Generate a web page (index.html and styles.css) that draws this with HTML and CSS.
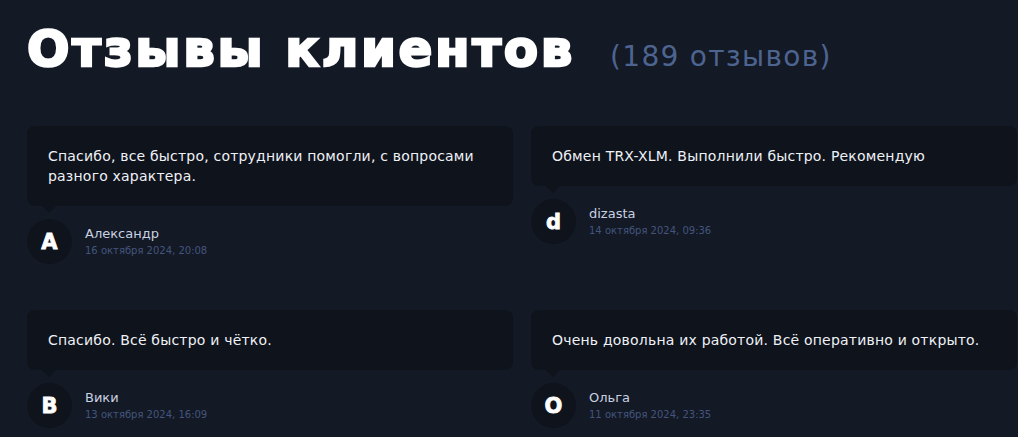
FILE: index.html
```html
<!DOCTYPE html>
<html lang="ru">
<head>
<meta charset="utf-8">
<title>Отзывы клиентов</title>
<link rel="stylesheet" href="styles.css">
</head>
<body>
<main class="page">
  <header class="head">
    <h1 class="title">Отзывы клиентов</h1>
    <span class="count">(189 отзывов)</span>
  </header>
  <section class="reviews">
    <article class="review">
      <div class="bubble">Спасибо, все быстро, сотрудники помогли, с вопросами разного характера.</div>
      <div class="author">
        <div class="avatar">А</div>
        <div class="meta">
          <div class="name">Александр</div>
          <div class="date">16 октября 2024, 20:08</div>
        </div>
      </div>
    </article>
    <article class="review">
      <div class="bubble">Обмен TRX-XLM. Выполнили быстро. Рекомендую</div>
      <div class="author">
        <div class="avatar">d</div>
        <div class="meta">
          <div class="name">dizasta</div>
          <div class="date">14 октября 2024, 09:36</div>
        </div>
      </div>
    </article>
    <article class="review">
      <div class="bubble">Спасибо. Всё быстро и чётко.</div>
      <div class="author">
        <div class="avatar">В</div>
        <div class="meta">
          <div class="name">Вики</div>
          <div class="date">13 октября 2024, 16:09</div>
        </div>
      </div>
    </article>
    <article class="review">
      <div class="bubble">Очень довольна их работой. Всё оперативно и открыто.</div>
      <div class="author">
        <div class="avatar">О</div>
        <div class="meta">
          <div class="name">Ольга</div>
          <div class="date">11 октября 2024, 23:35</div>
        </div>
      </div>
    </article>
  </section>
</main>
</body>
</html>
```

FILE: styles.css
```css
html, body {
  margin: 0;
  padding: 0;
  background: #131925;
  overflow: hidden;
}

.page {
  padding: 21px 0 0 27px;
  font-family: "DejaVu Sans", "Noto Sans", sans-serif;
  color: #e9edf4;
}

.head {
  display: flex;
  align-items: baseline;
  gap: 35px;
  height: 60px;
  margin-bottom: 45px;
}

.title {
  margin: 0;
  font-family: "DejaVu Sans", sans-serif;
  font-weight: 900;
  font-size: 50px;
  line-height: 56px;
  letter-spacing: 2.6px;
  color: #ffffff;
  -webkit-text-stroke: 2.4px #ffffff;
}

.count {
  font-family: "DejaVu Sans", sans-serif;
  font-size: 28px;
  letter-spacing: 1.3px;
  color: #4d6490;
}

.reviews {
  display: grid;
  grid-template-columns: 486px 486px;
  column-gap: 18px;
  row-gap: 46px;
  align-items: start;
}

.bubble {
  position: relative;
  background: #0f131c;
  border-radius: 8px;
  padding: 20px 21px;
  font-size: 14px;
  line-height: 20px;
  letter-spacing: 0.2px;
  color: #eef1f6;
}

.bubble::after {
  content: "";
  position: absolute;
  left: 15px;
  top: 100%;
  border-left: 7px solid transparent;
  border-right: 7px solid transparent;
  border-top: 7px solid #0f131c;
}

.author {
  display: flex;
  align-items: center;
  gap: 13px;
  margin-top: 13px;
}

.avatar {
  width: 45px;
  height: 45px;
  border-radius: 50%;
  background: #0f131c;
  display: flex;
  align-items: center;
  justify-content: center;
  font-weight: 900;
  font-size: 21px;
  color: #ffffff;
  -webkit-text-stroke: 0.8px #ffffff;
}

.meta {
  display: flex;
  flex-direction: column;
  gap: 3px;
}

.name {
  font-size: 13px;
  line-height: 15px;
  color: #c9d1e2;
}

.date {
  font-size: 10px;
  line-height: 13px;
  color: #43557d;
}
```
